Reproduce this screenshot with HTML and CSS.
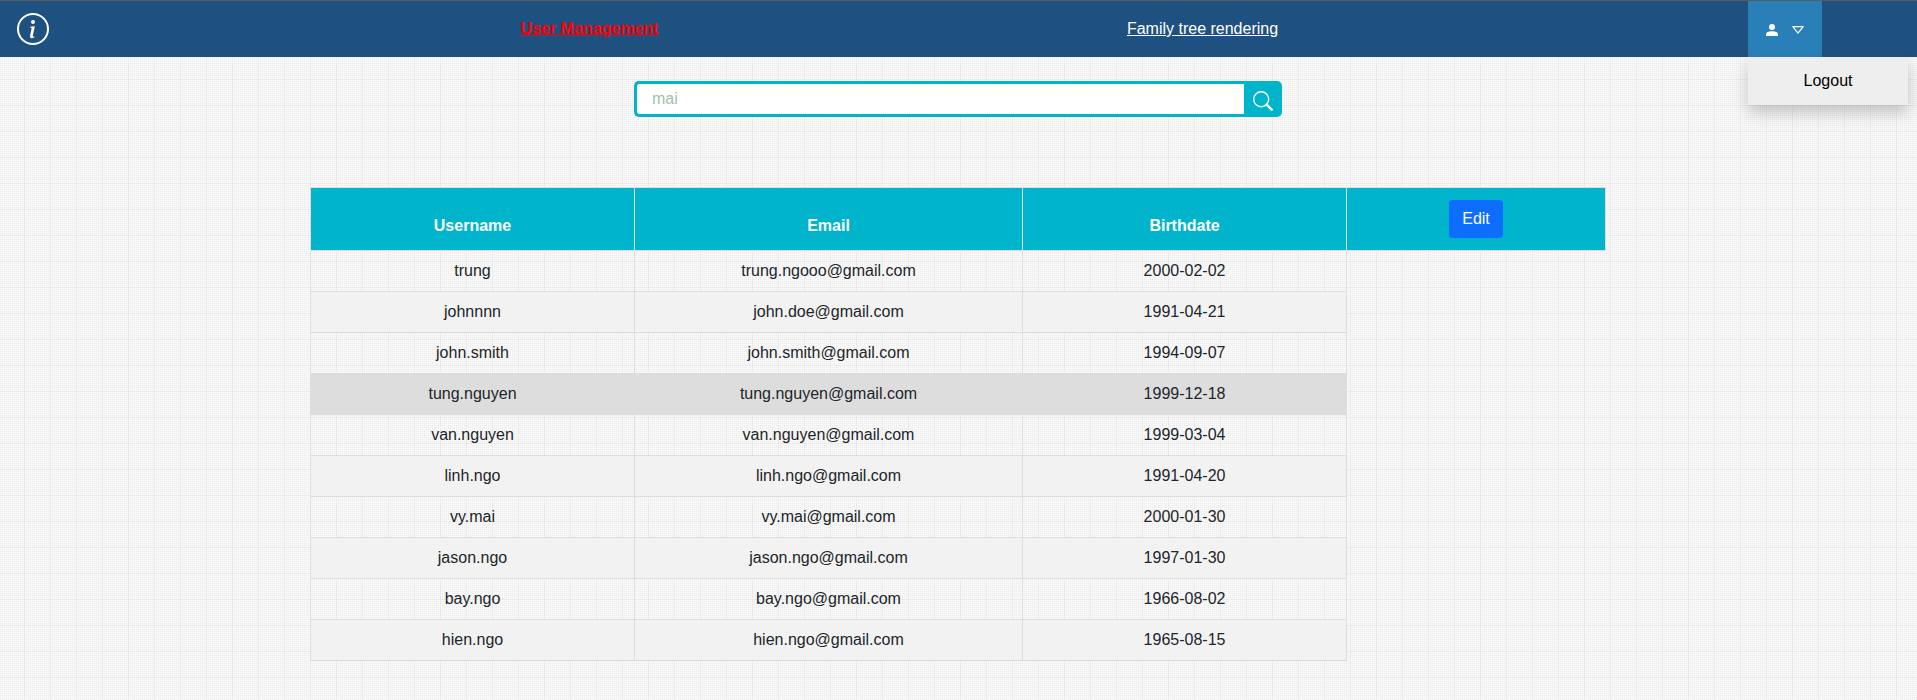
FILE: index.html
```html
<!DOCTYPE html>
<html lang="en">
<head>
<meta charset="utf-8">
<title>User Management</title>
<link rel="stylesheet" href="styles.css">
</head>
<body>
<header class="navbar">
  <a class="info" href="#" aria-label="Info">
    <svg width="32" height="32" viewBox="0 0 16 16" fill="#fff"><path d="M8 15A7 7 0 1 1 8 1a7 7 0 0 1 0 14zm0 1A8 8 0 1 0 8 0a8 8 0 0 0 0 16z"/><path d="m8.93 6.588-2.29.287-.082.38.45.083c.294.07.352.176.288.469l-.738 3.468c-.194.897.105 1.319.808 1.319.545 0 1.178-.252 1.465-.598l.088-.416c-.2.176-.492.246-.686.246-.275 0-.375-.193-.304-.533L8.93 6.588zM9 4.5a1 1 0 1 1-2 0 1 1 0 0 1 2 0z"/></svg>
  </a>
  <nav class="links">
    <a class="link active" href="#">User Management</a>
    <a class="link" href="#">Family tree rendering</a>
  </nav>
  <div class="account">
    <button class="account-button" type="button" aria-label="Account">
      <svg width="12" height="12" viewBox="0 0 12 12" fill="#fff"><circle cx="6" cy="3" r="3"/><path d="M0 12v-1.5C0 8.200 2.500 7.200 6 7.200s6 1 6 3.300V12z"/></svg>
      <svg width="12" height="8" viewBox="0 0 12 8" fill="none" stroke="#fff" stroke-width="1.200" stroke-linejoin="round"><path d="M.8.700h10.400L6 7.200z"/></svg>
    </button>
    <div class="menu"><a href="#">Logout</a></div>
  </div>
</header>
<main class="content">
  <form class="search">
    <input class="term" type="text" placeholder="mai">
    <button class="go" type="button" aria-label="Search">
      <svg width="20" height="20" viewBox="0 0 20 20" fill="none" stroke="#fff"><circle cx="8.200" cy="8.200" r="7.500" stroke-width="1.400"/><path d="m13.500 13.500 5.200 5.200" stroke-width="2.400" stroke-linecap="round"/></svg>
    </button>
  </form>
  <table class="users">
    <colgroup><col class="c-name"><col class="c-mail"><col class="c-date"><col class="c-edit"></colgroup>
    <thead><tr><th>Username</th><th>Email</th><th>Birthdate</th><th class="action"><button class="edit" type="button">Edit</button></th></tr></thead>
    <tbody>
      <tr><td>trung</td><td>trung.ngooo@gmail.com</td><td>2000-02-02</td></tr>
      <tr><td>johnnnn</td><td>john.doe@gmail.com</td><td>1991-04-21</td></tr>
      <tr><td>john.smith</td><td>john.smith@gmail.com</td><td>1994-09-07</td></tr>
      <tr class="selected"><td>tung.nguyen</td><td>tung.nguyen@gmail.com</td><td>1999-12-18</td></tr>
      <tr><td>van.nguyen</td><td>van.nguyen@gmail.com</td><td>1999-03-04</td></tr>
      <tr><td>linh.ngo</td><td>linh.ngo@gmail.com</td><td>1991-04-20</td></tr>
      <tr><td>vy.mai</td><td>vy.mai@gmail.com</td><td>2000-01-30</td></tr>
      <tr><td>jason.ngo</td><td>jason.ngo@gmail.com</td><td>1997-01-30</td></tr>
      <tr><td>bay.ngo</td><td>bay.ngo@gmail.com</td><td>1966-08-02</td></tr>
      <tr><td>hien.ngo</td><td>hien.ngo@gmail.com</td><td>1965-08-15</td></tr>
    </tbody>
  </table>
</main>
</body>
</html>
```
FILE: styles.css
```css
* { box-sizing: border-box; }
body {
  margin: 0;
  min-height: 700px;
  overflow: hidden;
  font: 16px/24px "Liberation Sans", Arial, sans-serif;
  color: #212529;
  background-color: #f8f8f8;
  background-image:
    linear-gradient(90deg, #e9e9e9 1px, transparent 1px),
    linear-gradient(#e9e9e9 1px, transparent 1px),
    conic-gradient(transparent 75%, #ebebeb 0);
  background-size: 26px 26px, 26px 26px, 2px 2px;
  background-position: 24px 0, 0 1px, 0 1px;
}
.navbar {
  display: grid;
  grid-template-columns: 16px 1fr 169px;
  height: 57px;
  border-top: 1px solid #5b5b5b;
  background: #1f5180;
}
.info { padding: 12px 0 0 17px; }
.info svg { display: block; }
.links {
  display: grid;
  grid-template-columns: 613px 613px;
  padding: 16px 0 0 267px;
  text-align: center;
}
.link { color: #fff; }
.active { color: #f00; font-weight: 700; }
.account { position: relative; }
.account-button {
  display: flex;
  align-items: flex-start;
  width: 74px;
  height: 56px;
  padding: 23px 18px;
  gap: 14px;
  border: 0;
  background: #2980b9;
}
.account-button svg + svg { margin-top: 2px; }
.menu {
  position: absolute;
  top: 56px;
  left: 0;
  width: 160px;
  padding: 12px 16px;
  background: #eee;
  box-shadow: 0 8px 16px rgba(0, 0, 0, .2);
  text-align: center;
}
.menu a { color: #000; text-decoration: none; }
.content { padding: 24px 311px 0 310px; }
.search { display: flex; width: 648px; height: 36px; margin: 0 0 70px 324px; }
.term {
  flex: 1;
  min-width: 0;
  padding: 0 15px;
  border: 3px solid #00b4cc;
  border-right: 0;
  border-radius: 5px 0 0 5px;
  font: inherit;
  background: #fff;
}
.term::placeholder { color: #9dbfaf; opacity: 1; }
.go {
  width: 38px;
  padding: 10px 0 0 9px;
  border: 0;
  border-radius: 0 5px 5px 0;
  background: #00b4cc;
  display: flex;
}
.go svg { flex: none; }
.users {
  width: 1296px;
  table-layout: fixed;
  border-collapse: collapse;
  text-align: center;
}
.c-name, .c-date { width: 324px; }
.c-mail { width: 388px; }
th, td { border: 1px solid #ddd; padding: 8px; }
th {
  height: 63px;
  padding: 12px 8px;
  color: #fff;
  background: #00b4cc;
  vertical-align: bottom;
}
.action { vertical-align: top; }
.edit {
  display: block;
  width: 54px;
  height: 38px;
  margin: 0 auto;
  padding: 0;
  border: 0;
  border-radius: 4px;
  font: inherit;
  font-weight: 400;
  color: #fff;
  background: #0d6efd;
}
tbody tr:nth-child(even) { background: #f2f2f2; }
tbody .selected.selected { background: #ddd; }
```
